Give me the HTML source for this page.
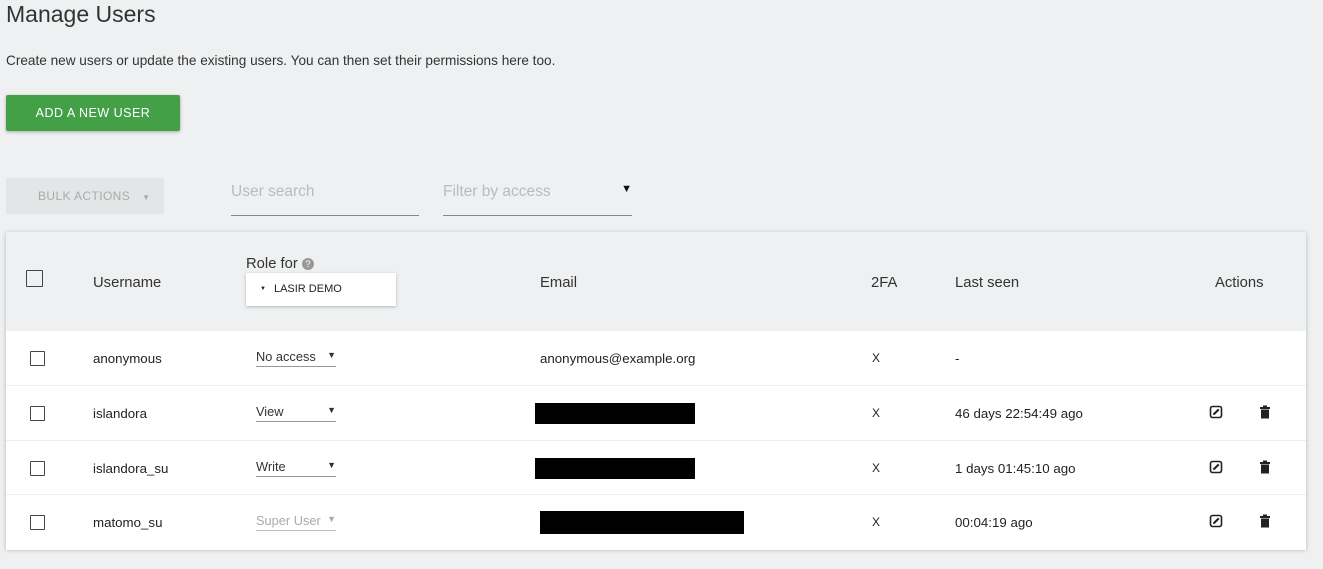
<!DOCTYPE html>
<html><head><style>
body{margin:0;width:1323px;height:569px;background:#eef0f1;font-family:"Liberation Sans",sans-serif;color:#222;position:relative;overflow:hidden}
.a{position:absolute}
.cb{position:absolute;width:13px;height:13px;border:1.5px solid #444;border-radius:1px;background:#fff}
.row{position:absolute;left:6px;width:1300px;height:54px;background:#fff;border-top:1px solid #eee;font-size:13.3px}
.row span{position:absolute;top:20px}
.sel{position:absolute;top:18px;left:250px;width:80px;border-bottom:1px solid #999;height:17px;font-size:12.8px;color:#333}
.sel b{position:absolute;right:0;top:1px;font-size:9px}
.blk{position:absolute;top:17px;height:21px;background:#000}
.h{position:absolute;top:275px;font-size:14.8px;color:#333}
</style></head><body>
<div class="a" style="left:6px;top:1px;font-size:23px;color:#333">Manage Users</div>
<div class="a" style="left:6px;top:53px;font-size:13.6px;color:#333">Create new users or update the existing users. You can then set their permissions here too.</div>
<div class="a" style="left:6px;top:95px;width:174px;height:36px;background:#43a047;border-radius:2px;box-shadow:0 1px 3px rgba(0,0,0,.3);color:#fff;font-size:12.5px;letter-spacing:.5px;line-height:36px;text-align:center">ADD A NEW USER</div>
<div class="a" style="left:6px;top:178px;width:158px;height:36px;background:#e4e5e6;border-radius:2px;color:#aaa;font-size:12px;line-height:36px;letter-spacing:.4px"><span style="margin-left:32px">BULK ACTIONS</span><span style="margin-left:12px;font-size:8px">▼</span></div>
<div class="a" style="left:231px;top:183px;width:188px;height:32px;border-bottom:1px solid #888;color:#bbb;font-size:15.5px">User search</div>
<div class="a" style="left:443px;top:183px;width:189px;height:32px;border-bottom:1px solid #888;color:#bbb;font-size:15.5px">Filter by access<span style="position:absolute;right:0;top:0;color:#111;font-size:11px">▼</span></div>
<div class="a" style="left:6px;top:232px;width:1300px;height:317px;background:#eff0f1;box-shadow:0 1px 4px rgba(0,0,0,.25)"></div>
<div class="cb" style="left:26px;top:270px;width:15px;height:15px;background:transparent"></div>
<div class="h" style="left:93px">Username</div>
<div class="a" style="left:246px;top:256px;font-size:14.8px;color:#333">Role for <span style="display:inline-block;width:12px;height:12px;border-radius:50%;background:#999;color:#fff;font-size:9px;text-align:center;line-height:12px;vertical-align:1px">?</span></div>
<div class="a" style="left:246px;top:273px;width:150px;height:33px;background:#fff;box-shadow:0 1px 3px rgba(0,0,0,.25);font-size:11px;line-height:33px;color:#222"><span style="margin-left:14px;font-size:6px;vertical-align:2px">▼</span><span style="margin-left:8px">LASIR DEMO</span></div>
<div class="h" style="left:540px">Email</div>
<div class="h" style="left:871px">2FA</div>
<div class="h" style="left:955px">Last seen</div>
<div class="h" style="left:1215px">Actions</div>

<div class="row" style="top:331px;border-top:none"><div class="cb" style="left:24px;top:20px"></div><span style="left:87px">anonymous</span><div class="sel">No access<b>▼</b></div><span style="left:534px">anonymous@example.org</span><span style="left:866px;font-size:12px">X</span><span style="left:949px">-</span></div>
<div class="row" style="top:385px"><div class="cb" style="left:24px;top:20px"></div><span style="left:87px">islandora</span><div class="sel">View<b>▼</b></div><div class="blk" style="left:529px;width:160px"></div><span style="left:866px;font-size:12px">X</span><span style="left:949px">46 days 22:54:49 ago</span></div>
<div class="row" style="top:440px"><div class="cb" style="left:24px;top:20px"></div><span style="left:87px">islandora_su</span><div class="sel">Write<b>▼</b></div><div class="blk" style="left:529px;width:160px"></div><span style="left:866px;font-size:12px">X</span><span style="left:949px">1 days 01:45:10 ago</span></div>
<div class="row" style="top:494px;height:55px"><div class="cb" style="left:24px;top:20px"></div><span style="left:87px">matomo_su</span><div class="sel" style="color:#aaa;border-color:#bbb">Super User<b>▼</b></div><div class="blk" style="left:534px;width:204px;top:16px;height:23px"></div><span style="left:866px;font-size:12px">X</span><span style="left:949px">00:04:19 ago</span></div>

<svg class="a" style="left:1209px;top:405px" width="15" height="126" viewBox="0 0 15 126">
<g id="e"><rect x="1.5" y="1.5" width="11" height="11" rx="2" fill="none" stroke="#222" stroke-width="1.6"/><path d="M4 10 L4.3 8.3 L9 3.6 L10.5 5.1 L5.8 9.8Z" fill="#222"/></g>
<use href="#e" y="55"/><use href="#e" y="109"/>
</svg>
<svg class="a" style="left:1259px;top:405px" width="12" height="126" viewBox="0 0 12 126">
<g id="t"><rect x="1" y="2" width="10" height="2" fill="#222"/><rect x="4" y="0.5" width="4" height="2" fill="#222"/><rect x="2" y="4.5" width="8" height="9" fill="#222"/></g>
<use href="#t" y="55"/><use href="#t" y="109"/>
</svg>
</body></html>
